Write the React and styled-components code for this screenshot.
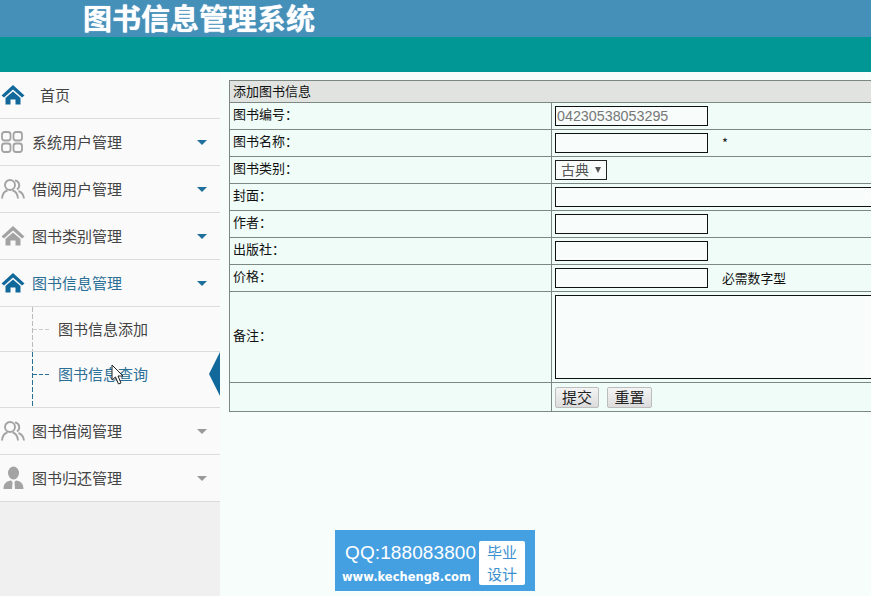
import React from "react";
import styled, { createGlobalStyle } from "styled-components";

const CJK = `"Noto Sans CJK SC", "Liberation Sans", sans-serif`;

const Global = createGlobalStyle`
  html, body {
    margin: 0;
    padding: 0;
    height: 100%;
    overflow: hidden;
    background: #f6fdfb;
  }
  * { box-sizing: border-box; }
`;

const Page = styled.div`
  position: relative;
  width: 871px;
  height: 596px;
  overflow: hidden;
  display: flex;
  flex-direction: column;
  font-family: ${CJK};
`;

const TitleBar = styled.header`
  height: 37px;
  flex: none;
  background: #4490b8;
  padding-left: 83px;
  color: #fff;
  font-size: 29px;
  line-height: 35px;
  font-weight: 700;
  white-space: nowrap;
  text-shadow: 0 0 1px #eef;
`;

const TealBar = styled.div`
  height: 35px;
  flex: none;
  background: #009795;
`;

const Body = styled.div`
  flex: 1;
  display: flex;
  min-height: 0;
`;

const Sidebar = styled.nav`
  width: 220px;
  flex: none;
  background: #f0f0f0;
  position: relative;
`;

const MenuRow = styled.div`
  height: 47px;
  display: flex;
  align-items: center;
  background: #fafafa;
  border-bottom: 1px solid #dcdcdc;
  color: ${(p) => (p.$active ? "#2a6f96" : "#444")};
  font-size: 15px;
`;

const IconSlot = styled.span`
  width: 32px;
  flex: none;
  display: flex;
  align-items: center;
  justify-content: flex-start;
  padding-left: 1px;
`;

const MenuLabel = styled.span`
  flex: 1;
  margin-left: ${(p) => (p.$home ? "8px" : "0")};
  padding-bottom: 2px;
`;

const Caret = styled.span`
  width: 0;
  height: 0;
  margin-right: 13px;
  border-left: 5px solid transparent;
  border-right: 5px solid transparent;
  border-top: 5px solid ${(p) => (p.$muted ? "#999" : "#1f6f9c")};
`;

const SubRow = styled.div`
  position: relative;
  height: ${(p) => p.$h}px;
  display: flex;
  align-items: center;
  padding-left: 58px;
  padding-bottom: ${(p) => (p.$active ? "12px" : "2px")};
  background: #fafafa;
  border-bottom: 1px solid #dcdcdc;
  font-size: 15px;
  color: ${(p) => (p.$active ? "#2a6f96" : "#444")};

  &::before {
    content: "";
    position: absolute;
    left: 32px;
    top: 0;
    bottom: 0;
    width: 1px;
    background: repeating-linear-gradient(
      to bottom,
      ${(p) => (p.$active ? "#2a6f96" : "#bbb")} 0 5px,
      transparent 5px 7px
    );
  }
  &::after {
    content: "";
    position: absolute;
    left: 33px;
    width: 18px;
    top: 22px;
    height: 1px;
    background: repeating-linear-gradient(
      to right,
      ${(p) => (p.$active ? "#2a6f96" : "#ccc")} 0 4px,
      transparent 4px 6px
    );
  }
`;

const ActiveArrow = styled.span`
  position: absolute;
  right: 0;
  top: 0;
  width: 11px;
  height: 44px;
  background: #11689b;
  clip-path: polygon(100% 0, 100% 100%, 0 50%);
`;

const Main = styled.main`
  flex: 1;
  min-width: 0;
  padding: 8px 0 0 9px;
  overflow: hidden;
`;

const FormTable = styled.table`
  width: 760px;
  table-layout: fixed;
  border-collapse: collapse;
  border: 1px solid #333;
  background: #effcf8;
  color: #111;
`;

const HeadCell = styled.th`
  height: 22px;
  padding: 0 0 2px 3px;
  font-weight: 400;
  font-size: 13px;
  line-height: 15px;
  text-align: left;
  background: #e0e3e0;
  border: 1px solid #7d8783;
`;

const LabelCell = styled.td`
  width: 322px;
  padding: 0 0 5px 3px;
  height: ${(p) => p.$h || 27}px;
  border: 1px solid #7d8783;
  font-size: 13px;
`;

const FieldCell = styled.td`
  padding: 0 0 0 3px;
  height: ${(p) => p.$h || 27}px;
  border: 1px solid #7d8783;
  white-space: nowrap;
`;

const FieldWrap = styled.div`
  display: flex;
  align-items: center;
  gap: 14px;
`;

const TextInput = styled.input`
  display: block;
  width: ${(p) => (p.$wide ? "340px" : "153px")};
  height: 20px;
  padding: 0 0 0 1px;
  border: 1px solid #111;
  border-radius: 0;
  outline: none;
  background: #f8fdfb;
  font-family: "Liberation Sans", sans-serif;
  font-size: 14.3px;
  color: #777;
`;

const Note = styled.span`
  font-size: 12.8px;
  line-height: 14px;
  padding-bottom: 1px;
  color: #111;
`;

const SelectBox = styled.div`
  width: 52px;
  height: 20px;
  display: flex;
  align-items: center;
  padding: 0 0 2px 5px;
  gap: 6px;
  border: 1px solid #222;
  background: #f8fdfb;
  color: #555;
  font-size: 14px;
`;

const SelectArrow = styled.span`
  width: 0;
  height: 0;
  margin-top: 2px;
  border-left: 3px solid transparent;
  border-right: 3px solid transparent;
  border-top: 6px solid #555;
`;

const NoteArea = styled.textarea`
  display: block;
  width: 340px;
  height: 84px;
  margin: 0;
  padding: 0;
  border: 1px solid #111;
  border-radius: 0;
  background: #f8fdfb;
  outline: none;
  resize: none;
`;

const ButtonRow = styled.div`
  display: flex;
  gap: 8px;
`;

const FormButton = styled.button`
  width: ${(p) => p.$w}px;
  height: 21px;
  padding: 0 0 2px;
  border: 1px solid #bdbdbd;
  border-radius: 2px;
  background: linear-gradient(#f4f4f4, #dcdcdc);
  font-family: ${CJK};
  font-size: 15px;
  line-height: 18px;
  color: #222;
`;

const Badge = styled.div`
  position: absolute;
  left: 335px;
  top: 530px;
  width: 200px;
  height: 61px;
  background: #45a0e2;
  color: #fff;
  font-family: "DejaVu Sans", sans-serif;
`;

const BadgeQQ = styled.div`
  position: absolute;
  left: 10px;
  top: 12px;
  font-size: 19px;
  line-height: 22px;
  white-space: nowrap;
  font-family: "Liberation Sans", sans-serif;
  letter-spacing: 0.1px;
`;

const BadgeUrl = styled.div`
  position: absolute;
  left: 7px;
  top: 39px;
  font-size: 11.5px;
  line-height: 16px;
  font-weight: 700;
  white-space: nowrap;
`;

const BadgeTag = styled.div`
  position: absolute;
  left: 144px;
  top: 11px;
  width: 46px;
  height: 44px;
  background: #fff;
  border-radius: 2px;
  color: #3c8fd0;
  font-family: ${CJK};
  font-size: 15px;
  line-height: 22px;
  text-align: center;
`;

const Cursor = styled.svg`
  position: absolute;
  left: 111px;
  top: 364px;
`;

const HomeIcon = ({ color }) => (
  <svg width="24" height="22" viewBox="0 0 24 22">
    <path d="M12 1 L0.5 11.5 L3 13.5 L12 5.5 L21 13.5 L23.5 11.5 Z" fill={color} />
    <path d="M4.5 14 L12 7.5 L19.5 14 V20.5 H14.5 V15.5 H9.5 V20.5 H4.5 Z" fill={color} />
  </svg>
);

const GridIcon = () => (
  <svg width="22" height="22" viewBox="0 0 22 22" fill="none" stroke="#a3a3a3" strokeWidth="1.8">
    <rect x="1" y="1" width="8.5" height="8.5" rx="2.5" />
    <rect x="12.5" y="1" width="8.5" height="8.5" rx="2.5" />
    <rect x="1" y="12.5" width="8.5" height="8.5" rx="2.5" />
    <rect x="12.5" y="12.5" width="8.5" height="8.5" rx="2.5" />
  </svg>
);

const UsersIcon = () => (
  <svg width="24" height="22" viewBox="0 0 24 22" fill="none" stroke="#a3a3a3" strokeWidth="1.9">
    <circle cx="9" cy="7" r="5" />
    <path d="M14 2.4 A5 5 0 0 1 16 11.5" />
    <path d="M1 20.5 C1.5 15.5 4 13 6.5 12.5 M11.5 12.5 C14 13 16.5 15.5 17 20.5" />
    <path d="M17.5 13 C20.5 14 22.5 16.5 23 20.5" />
  </svg>
);

const PersonIcon = () => (
  <svg width="24" height="24" viewBox="0 0 24 24">
    <ellipse cx="12.5" cy="7" rx="5.5" ry="6.5" fill="#a3a3a3" />
    <path d="M2.5 23 C2.5 17 6 15 10 14.5 L11.5 16 L11 23 Z M22.5 23 C22.5 17 19 15 15 14.5 L13.5 16 L14 23 Z" fill="#a3a3a3" />
  </svg>
);

const menuTop = [
  { label: "系统用户管理", icon: <GridIcon /> },
  { label: "借阅用户管理", icon: <UsersIcon /> },
  { label: "图书类别管理", icon: <HomeIcon color="#a3a3a3" /> },
];

const menuBottom = [
  { label: "图书借阅管理", icon: <UsersIcon /> },
  { label: "图书归还管理", icon: <PersonIcon /> },
];

export default function App() {
  return (
    <Page>
      <Global />
      <TitleBar>图书信息管理系统</TitleBar>
      <TealBar />
      <Body>
        <Sidebar>
          <MenuRow>
            <IconSlot><HomeIcon color="#11689b" /></IconSlot>
            <MenuLabel $home>首页</MenuLabel>
          </MenuRow>
          {menuTop.map((m) => (
            <MenuRow key={m.label}>
              <IconSlot>{m.icon}</IconSlot>
              <MenuLabel>{m.label}</MenuLabel>
              <Caret />
            </MenuRow>
          ))}
          <MenuRow $active>
            <IconSlot><HomeIcon color="#11689b" /></IconSlot>
            <MenuLabel>图书信息管理</MenuLabel>
            <Caret />
          </MenuRow>
          <SubRow $h={45}>图书信息添加</SubRow>
          <SubRow $h={56} $active>
            图书信息查询
            <ActiveArrow />
          </SubRow>
          {menuBottom.map((m) => (
            <MenuRow key={m.label}>
              <IconSlot>{m.icon}</IconSlot>
              <MenuLabel>{m.label}</MenuLabel>
              <Caret $muted />
            </MenuRow>
          ))}
        </Sidebar>
        <Main>
          <FormTable>
            <colgroup>
              <col width="322" />
              <col />
            </colgroup>
            <tbody>
              <tr><HeadCell colSpan={2}>添加图书信息</HeadCell></tr>
              <tr>
                <LabelCell>图书编号：</LabelCell>
                <FieldCell><TextInput readOnly value="04230538053295" /></FieldCell>
              </tr>
              <tr>
                <LabelCell>图书名称：</LabelCell>
                <FieldCell><FieldWrap><TextInput /><Note>*</Note></FieldWrap></FieldCell>
              </tr>
              <tr>
                <LabelCell>图书类别：</LabelCell>
                <FieldCell><SelectBox>古典<SelectArrow /></SelectBox></FieldCell>
              </tr>
              <tr>
                <LabelCell>封面：</LabelCell>
                <FieldCell><TextInput $wide /></FieldCell>
              </tr>
              <tr>
                <LabelCell>作者：</LabelCell>
                <FieldCell><TextInput /></FieldCell>
              </tr>
              <tr>
                <LabelCell>出版社：</LabelCell>
                <FieldCell><TextInput /></FieldCell>
              </tr>
              <tr>
                <LabelCell>价格：</LabelCell>
                <FieldCell><FieldWrap><TextInput /><Note>必需数字型</Note></FieldWrap></FieldCell>
              </tr>
              <tr>
                <LabelCell $h={91}>备注：</LabelCell>
                <FieldCell $h={91}><NoteArea /></FieldCell>
              </tr>
              <tr>
                <LabelCell $h={29} />
                <FieldCell $h={29}>
                  <ButtonRow>
                    <FormButton $w={44}>提交</FormButton>
                    <FormButton $w={45}>重置</FormButton>
                  </ButtonRow>
                </FieldCell>
              </tr>
            </tbody>
          </FormTable>
        </Main>
      </Body>
      <Cursor width="14" height="22" viewBox="0 0 14 22">
        <path d="M1 1 V16 L4.5 13 L7.5 20 L10 19 L7 12 L12 12 Z" fill="#fff" stroke="#222" strokeWidth="1" />
      </Cursor>
      <Badge>
        <BadgeQQ>QQ:188083800</BadgeQQ>
        <BadgeUrl>www.kecheng8.com</BadgeUrl>
        <BadgeTag>毕业<br />设计</BadgeTag>
      </Badge>
    </Page>
  );
}
